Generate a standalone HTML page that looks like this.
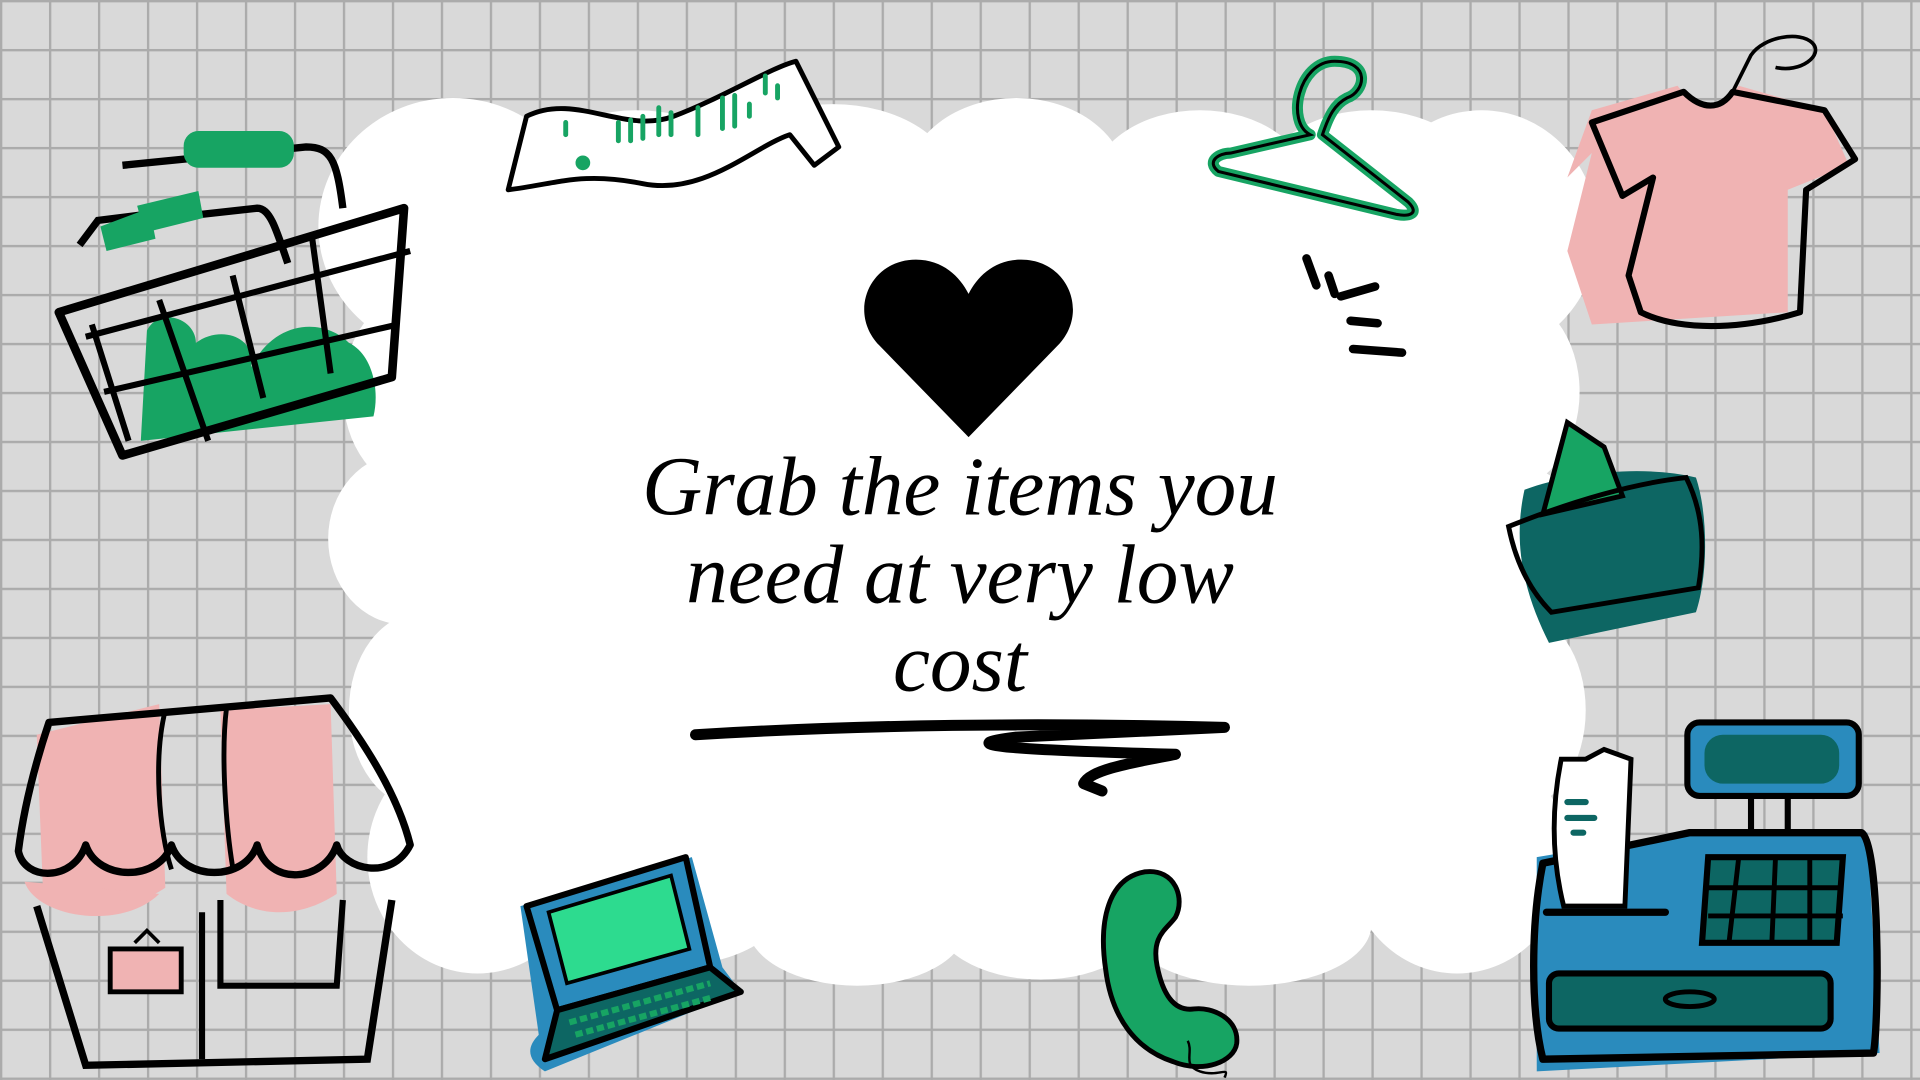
<!DOCTYPE html>
<html><head><meta charset="utf-8"><style>
html,body{margin:0;padding:0;width:1920px;height:1080px;overflow:hidden;background:#d9d9d9}
svg{display:block}
</style></head><body>
<svg width="1920" height="1080" viewBox="0 0 1568 882" preserveAspectRatio="none" xmlns="http://www.w3.org/2000/svg">
<defs>
<pattern id="g" width="40" height="40" patternUnits="userSpaceOnUse">
<rect width="40" height="40" fill="#d9d9d9"/>
<path d="M0.8 0V40M0 0.8H40" stroke="#ababab" stroke-width="2.2"/>
</pattern>
</defs>
<rect width="1568" height="882" fill="url(#g)"/>
<!-- white wavy blob -->
<g fill="#fff">
<rect x="320" y="140" width="930" height="610"/>
<ellipse cx="370" cy="185" rx="110" ry="105"/><ellipse cx="520" cy="160" rx="100" ry="70"/><ellipse cx="680" cy="150" rx="100" ry="65"/>
<ellipse cx="830" cy="150" rx="90" ry="70"/><ellipse cx="980" cy="155" rx="90" ry="65"/><ellipse cx="1120" cy="160" rx="95" ry="70"/><ellipse cx="1210" cy="190" rx="95" ry="100"/>
<ellipse cx="340" cy="320" rx="60" ry="80"/><ellipse cx="330" cy="440" rx="62" ry="70"/><ellipse cx="345" cy="580" rx="60" ry="80"/><ellipse cx="390" cy="700" rx="90" ry="95"/>
<ellipse cx="1230" cy="320" rx="60" ry="80"/><ellipse cx="1240" cy="450" rx="55" ry="70"/><ellipse cx="1240" cy="580" rx="55" ry="80"/><ellipse cx="1190" cy="700" rx="90" ry="95"/>
<ellipse cx="540" cy="740" rx="100" ry="50"/><ellipse cx="700" cy="755" rx="90" ry="50"/><ellipse cx="850" cy="745" rx="90" ry="55"/><ellipse cx="1020" cy="755" rx="100" ry="50"/>
</g>
<!-- heart -->
<path d="M791 357 L718 282 C692 255 710 212 748 212 C770 212 784 226 791 240 C798 226 812 212 834 212 C872 212 890 255 864 282 Z" fill="#000"/>
<!-- text -->
<g font-family="Liberation Serif, serif" font-style="italic" font-size="68" text-anchor="middle" fill="#000">
<text x="784" y="420">Grab the items you</text>
<text x="784" y="492">need at very low</text>
<text x="784" y="564">cost</text>
</g>
<!-- underline -->
<path d="M568 600 C700 592 850 590 1000 594 L830 602 C780 608 810 612 960 616 C930 622 890 628 885 640 L900 646" fill="none" stroke="#000" stroke-width="9" stroke-linecap="round" stroke-linejoin="round"/>
<!-- marks -->
<g stroke="#000" stroke-width="7" stroke-linecap="round">
<path d="M1067 211l8 22M1085 225l5 15M1095 242l28 -8M1103 262l22 2M1105 285l40 3"/>
</g>
<!-- basket -->
<g>
<path d="M120 270c10-20 40-10 40 10c20-15 50-5 45 20c20-40 60-40 80-20c20 10 25 40 20 60l-190 20z" fill="#17a463"/>
<path d="M100 135l150-15c20 0 25 10 30 50M65 200l15-20 40-5M120 180l90-10c10 0 15 15 25 45" fill="none" stroke="#000" stroke-width="6"/>
<rect x="150" y="107" width="90" height="30" rx="12" fill="#17a463"/>
<path d="M82 185l40-15 5 25-40 10z M112 168l50-12 4 22-48 12z" fill="#17a463"/>
<path d="M48 255L330 170 320 308 100 372z" fill="none" stroke="#000" stroke-width="7" stroke-linejoin="round"/>
<path d="M70 275l265-70M85 320l240-55M75 265l30 95M130 245l40 115M190 225l25 100M255 195l15 110" fill="none" stroke="#000" stroke-width="5"/>
</g>
<!-- receipt strip -->
<path d="M430 95c40-20 80 15 120 0s80-40 100-45l35 70-20 15-20-25c-30 10-70 50-120 40s-70 0-110 5z" fill="#fff" stroke="#000" stroke-width="4" stroke-linejoin="round"/>
<g stroke="#17a463" stroke-width="4" stroke-linecap="round"><path d="M462 100v10M505 100v15M515 98v17M525 95v18M538 88v22M548 92v18M570 88v22M590 80v25M600 78v25M612 85v10M625 62v14M635 70v10"/></g>
<circle cx="476" cy="133" r="6" fill="#17a463"/>
<!-- hanger -->
<path d="M1070 110c-20-10-10-60 20-60s25 25 10 30c-10 5-15 15-20 30l70 55c10 10 0 12-10 10L995 140c-10-8 0-15 10-15l65-15z" fill="none" stroke="#17a463" stroke-width="9" stroke-linejoin="round"/>
<path d="M1070 110c-20-10-10-60 20-60s25 25 10 30c-10 5-15 15-20 30l70 55c10 10 0 12-10 10L995 140c-10-8 0-15 10-15l65-15z" fill="none" stroke="#000" stroke-width="2.5"/>
<!-- tshirt -->
<path d="M1300 90l70-20c15 20 35 20 50 0l70 20 20 45-50 20v100l-160 10-20-60 20-80-20 20z" fill="#f0b3b3"/>
<path d="M1300 100l75-25c15 15 30 15 40 0l75 15 25 40-40 25-5 100c-50 15-100 15-130 0l-10-30 20-80-25 15z" fill="none" stroke="#000" stroke-width="5" stroke-linejoin="round"/>
<path d="M1415 75l15-30c10-15 40-20 50-10s-10 25-30 20" fill="none" stroke="#000" stroke-width="3"/>
<!-- wallet -->
<path d="M1245 400c40-15 100-20 140-10 10 30 10 80 0 110l-120 25c-20-40-30-80-20-125z" fill="#0d6663"/>
<path d="M1260 420l20-75 30 20 15 40z" fill="#17a463" stroke="#000" stroke-width="4"/>
<path d="M1232 430c50-20 100-35 145-40 15 30 15 60 10 90l-120 20c-20-20-30-45-35-70z" fill="none" stroke="#000" stroke-width="4"/>
<!-- register -->
<path d="M1255 700l120-20h150l10 180-280 15z" fill="#2a8bbd"/>
<rect x="1378" y="590" width="140" height="60" rx="10" fill="#2a8bbd" stroke="#000" stroke-width="5"/>
<rect x="1392" y="600" width="110" height="40" rx="15" fill="#0d6663"/>
<path d="M1430 650v30M1460 650v30" stroke="#000" stroke-width="5"/>
<path d="M1260 705l120-25h140c15 5 15 150 10 180l-270 5c-10-40-10-110 0-160z" fill="none" stroke="#000" stroke-width="6" stroke-linejoin="round"/>
<path d="M1395 700h110l-5 70h-110z" fill="#0d6663" stroke="#000" stroke-width="5"/>
<path d="M1395 725h110M1395 748h110M1420 700l-8 70M1450 700l-3 70M1478 700l0 70" stroke="#000" stroke-width="4"/>
<rect x="1265" y="795" width="230" height="45" rx="8" fill="#0d6663" stroke="#000" stroke-width="5"/>
<ellipse cx="1380" cy="816" rx="20" ry="6" fill="none" stroke="#000" stroke-width="4"/>
<path d="M1275 620l20 0 15-8 22 8-5 120h-50c-10-40-10-80-2-120z" fill="#fff" stroke="#000" stroke-width="4"/>
<path d="M1263 745h97" stroke="#000" stroke-width="6" stroke-linecap="round"/>
<path d="M1280 655h15M1280 668h22M1285 680h8" stroke="#0d6663" stroke-width="5" stroke-linecap="round"/>
<!-- phone -->
<path d="M935 712c-30 5-38 40-32 80 5 40 25 65 55 75 25 10 50 0 52-15 2-20-20-30-35-28-15 2-25-10-30-35-5-25 8-30 15-40 8-15 0-40-25-37z" fill="#17a463" stroke="#000" stroke-width="4"/>
<path d="M970 850c5 10 -5 20 10 25s25-5 20 5" fill="none" stroke="#000" stroke-width="2"/>
<!-- laptop -->
<path d="M425 740l140-40 25 90 15 20-160 65c-15-10-15-20-5-30z" fill="#2a8bbd"/>
<path d="M430 740l130-40 20 90-125 35z" fill="#2a8bbd" stroke="#000" stroke-width="5" stroke-linejoin="round"/>
<path d="M448 745l100-30 15 60-100 28z" fill="#2ddb8f" stroke="#000" stroke-width="3"/>
<path d="M455 825l125-35 25 20-160 55z" fill="#0d6663" stroke="#000" stroke-width="5" stroke-linejoin="round"/>
<path d="M465 835l115-32M470 845l110-30" stroke="#17a463" stroke-width="5" stroke-dasharray="6 3"/>
<!-- shop -->
<path d="M30 600l100-25 5 150c-30 20-70 20-100 0z" fill="#f0b3b3"/>
<path d="M180 580l90-5 5 155c-30 20-65 20-90 0z" fill="#f0b3b3"/>
<path d="M20 720c10 30 80 40 110 10" fill="#f0b3b3"/>
<path d="M40 590l230-20c30 40 55 80 65 120c-15 30-55 20-60 0c-10 30-55 35-65 0c-10 30-60 30-70 0-10 30-60 30-70 0-10 30-50 30-55 5 5-40 15-75 25-105z" fill="none" stroke="#000" stroke-width="6" stroke-linejoin="round"/>
<path d="M135 580c-10 40-5 100 5 130M185 578c-5 40 0 100 5 130" stroke="#000" stroke-width="4" fill="none"/>
<path d="M30 740l40 130 230 -5 20-130" fill="none" stroke="#000" stroke-width="6"/>
<path d="M180 735v70h95l5-70" fill="none" stroke="#000" stroke-width="5"/>
<path d="M90 775h58v35h-58z" fill="#f0b3b3" stroke="#000" stroke-width="4"/>
<path d="M110 770l10-10 10 10" fill="none" stroke="#000" stroke-width="3"/>
<path d="M165 745v120" stroke="#000" stroke-width="5"/>
</svg>
</body></html>
